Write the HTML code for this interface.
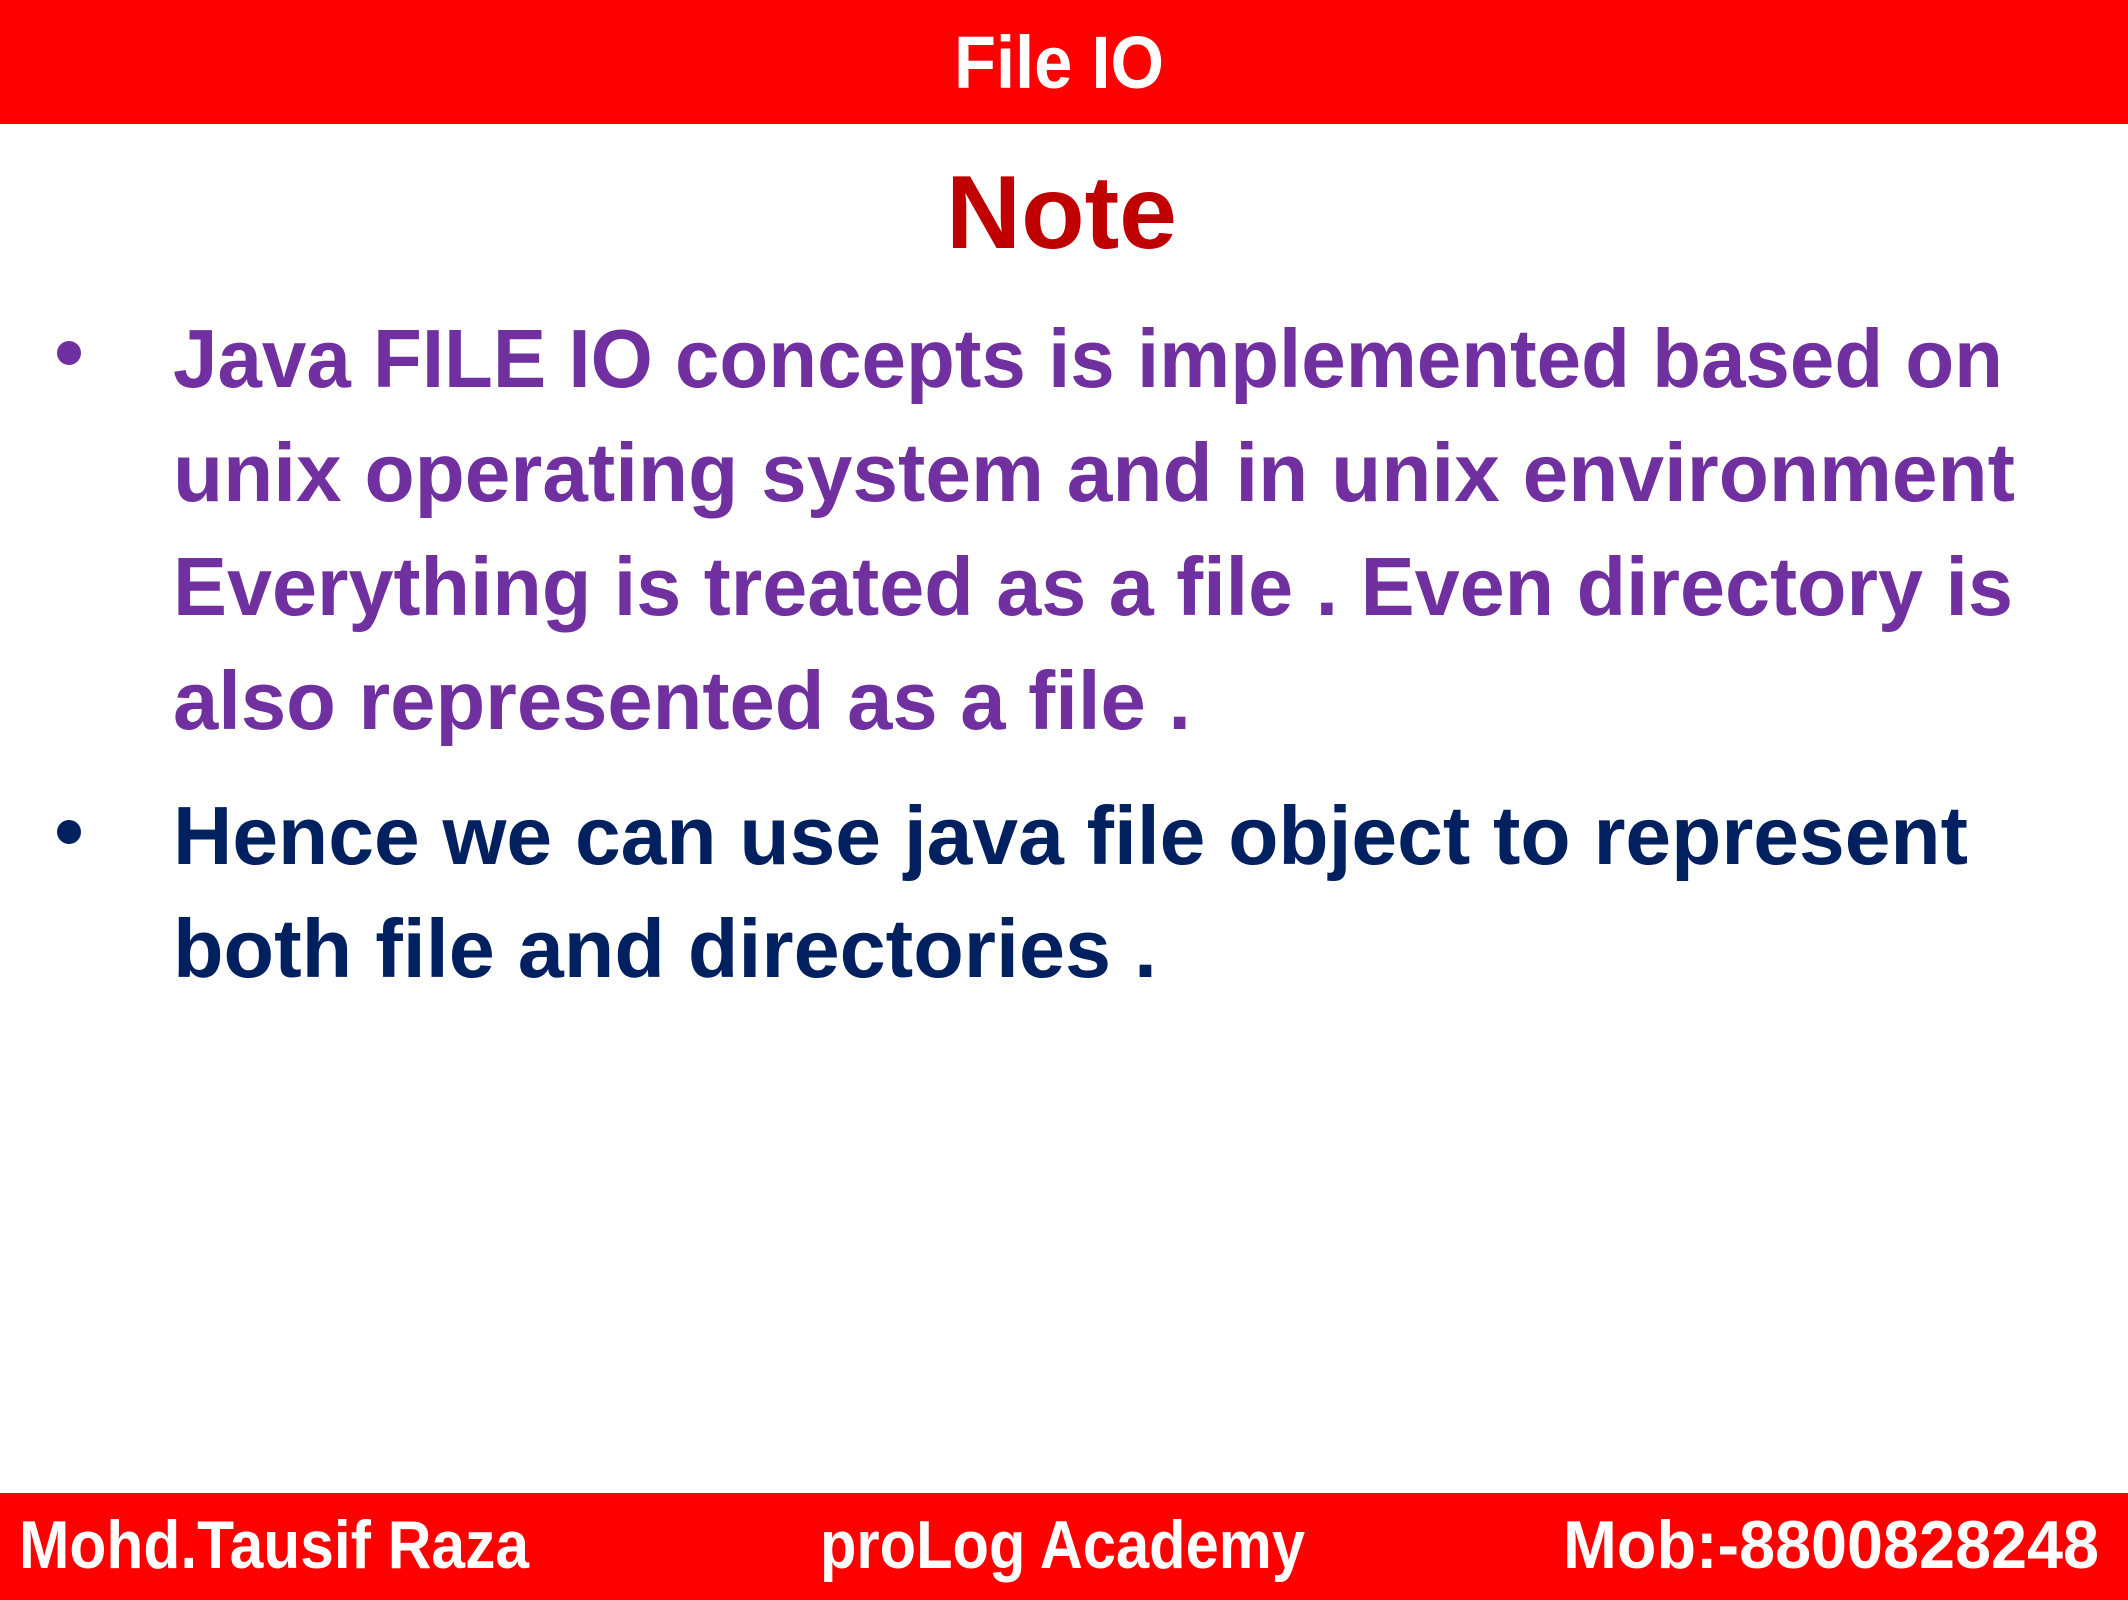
<!DOCTYPE html>
<html><head><meta charset="utf-8"><style>
html,body{margin:0;padding:0;background:#fff;width:2128px;height:1600px;overflow:hidden}
svg{display:block}
text{font-family:"Liberation Sans",sans-serif;font-weight:bold}
</style></head><body>
<svg width="2128" height="1600" viewBox="0 0 2128 1600" xmlns="http://www.w3.org/2000/svg">
<rect x="0" y="0" width="2128" height="124" fill="#ff0000"/>
<text x="954" y="88" font-size="74" fill="#fff" textLength="210" lengthAdjust="spacingAndGlyphs">File IO</text>
<text x="946" y="248" font-size="104" fill="#c00000" textLength="231" lengthAdjust="spacingAndGlyphs">Note</text>
<circle cx="69" cy="353" r="12" fill="#7030a0"/>
<g font-size="83" fill="#7030a0">
<text x="173" y="387" textLength="1830" lengthAdjust="spacingAndGlyphs">Java FILE IO concepts is implemented based on</text>
<text x="173" y="501" textLength="1842" lengthAdjust="spacingAndGlyphs">unix operating system and in unix environment</text>
<text x="173" y="615" textLength="1840" lengthAdjust="spacingAndGlyphs">Everything is treated as a file . Even directory is</text>
<text x="173" y="729" textLength="1018" lengthAdjust="spacingAndGlyphs">also represented as a file .</text>
</g>
<circle cx="69" cy="832" r="12" fill="#002060"/>
<g font-size="83" fill="#002060">
<text x="173" y="864" textLength="1795" lengthAdjust="spacingAndGlyphs">Hence we can use java file object to represent</text>
<text x="173" y="977" textLength="984" lengthAdjust="spacingAndGlyphs">both file and directories .</text>
</g>
<rect x="0" y="1493" width="2128" height="107" fill="#ff0000"/>
<g font-size="68" fill="#fff">
<text x="19" y="1568" textLength="510" lengthAdjust="spacingAndGlyphs">Mohd.Tausif Raza</text>
<text x="820" y="1568" textLength="485" lengthAdjust="spacingAndGlyphs">proLog Academy</text>
<text x="1563" y="1568" textLength="536" lengthAdjust="spacingAndGlyphs">Mob:-8800828248</text>
</g>
</svg>
</body></html>
